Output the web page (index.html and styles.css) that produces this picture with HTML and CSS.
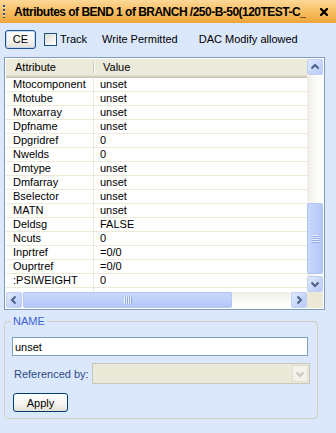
FILE: index.html
```html
<!DOCTYPE html>
<html>
<head>
<meta charset="utf-8">
<link rel="stylesheet" href="styles.css">
</head>
<body>
<div class="titlebar">
  <div class="grip"></div>
  <div class="title">Attributes of BEND 1 of BRANCH /250-B-50(120TEST-C_</div>
  <svg class="close" width="8" height="8" viewBox="0 0 8 8"><path d="M1 1 L7 7 M7 1 L1 7" stroke="#000" stroke-width="2.2" stroke-linecap="square"/></svg>
</div>

<div class="toolbar">
  <button class="btn ce">CE</button>
  <span class="check"></span>
  <span class="lbl track">Track</span>
  <span class="lbl wp">Write Permitted</span>
  <span class="lbl dac">DAC Modify allowed</span>
</div>

<div class="gridframe">
  <div class="main">
    <div class="header">
      <div class="hcell h1">Attribute</div>
      <div class="hcell h2">Value</div>
    </div>
    <div class="row"><div class="c1">Mtocomponent</div><div class="c2">unset</div></div>
    <div class="row"><div class="c1">Mtotube</div><div class="c2">unset</div></div>
    <div class="row"><div class="c1">Mtoxarray</div><div class="c2">unset</div></div>
    <div class="row"><div class="c1">Dpfname</div><div class="c2">unset</div></div>
    <div class="row"><div class="c1">Dpgridref</div><div class="c2">0</div></div>
    <div class="row"><div class="c1">Nwelds</div><div class="c2">0</div></div>
    <div class="row"><div class="c1">Dmtype</div><div class="c2">unset</div></div>
    <div class="row"><div class="c1">Dmfarray</div><div class="c2">unset</div></div>
    <div class="row"><div class="c1">Bselector</div><div class="c2">unset</div></div>
    <div class="row"><div class="c1">MATN</div><div class="c2">unset</div></div>
    <div class="row"><div class="c1">Deldsg</div><div class="c2">FALSE</div></div>
    <div class="row"><div class="c1">Ncuts</div><div class="c2">0</div></div>
    <div class="row"><div class="c1">Inprtref</div><div class="c2">=0/0</div></div>
    <div class="row"><div class="c1">Ouprtref</div><div class="c2">=0/0</div></div>
    <div class="row"><div class="c1">:PSIWEIGHT</div><div class="c2">0</div></div>
    <div class="row"><div class="c1"></div><div class="c2"></div></div>
  </div>
  <div class="vscroll">
    <div class="sbtn"><svg width="14" height="14" viewBox="0 0 14 14"><polyline points="3.5,8.5 7,5 10.5,8.5" fill="none" stroke="#4d6185" stroke-width="2"/></svg></div>
    <div class="vgap"></div>
    <div class="vthumb"><span class="grips-h"><i></i><i></i><i></i><i></i></span></div>
    <div class="vrest"></div>
    <div class="sbtn"><svg width="14" height="14" viewBox="0 0 14 14"><polyline points="3.5,5.5 7,9 10.5,5.5" fill="none" stroke="#4d6185" stroke-width="2"/></svg></div>
  </div>
  <div class="hscroll">
    <div class="sbtn"><svg width="14" height="14" viewBox="0 0 14 14"><polyline points="8.5,3.5 5,7 8.5,10.5" fill="none" stroke="#4d6185" stroke-width="2"/></svg></div>
    <div class="hthumb"><span class="grips-v"><i></i><i></i><i></i><i></i></span></div>
    <div class="hrest"></div>
    <div class="sbtn"><svg width="14" height="14" viewBox="0 0 14 14"><polyline points="5.5,3.5 9,7 5.5,10.5" fill="none" stroke="#4d6185" stroke-width="2"/></svg></div>
  </div>
  <div class="corner"></div>
</div>

<fieldset class="group">
  <legend>NAME</legend>
  <input class="name" type="text" value="unset">
  <div class="refrow">
    <span class="reflbl">Referenced by:</span>
    <div class="combo">
      <div class="comboarrow"><svg width="14" height="14" viewBox="0 0 14 14"><polyline points="3.5,5.5 7,9 10.5,5.5" fill="none" stroke="#c9c7ba" stroke-width="2"/></svg></div>
    </div>
  </div>
  <button class="btn apply">Apply</button>
</fieldset>
</body>
</html>
```

FILE: styles.css
```css
* { box-sizing: border-box; }
html, body { margin: 0; padding: 0; }
body {
  width: 336px;
  height: 433px;
  overflow: hidden;
  background: #dbe7fb;
  font-family: "Liberation Sans", Arial, sans-serif;
  font-size: 11px;
  color: #000;
}

.titlebar {
  height: 23px;
  display: flex;
  align-items: center;
  background: linear-gradient(#fcd898, #f7be62 50%, #f0a53a);
}
.grip {
  width: 2px;
  height: 13px;
  margin-left: 3px;
  flex: none;
  background: repeating-linear-gradient(to bottom, #2b4a8e 0 2px, #fbe6c0 2px 3px, transparent 3px 4px);
}
.title {
  margin-left: 9px;
  font-weight: bold;
  font-size: 12px;
  white-space: nowrap;
  letter-spacing: -0.52px;
  flex: 0 1 auto;
  overflow: hidden;
}
.close { margin-left: auto; margin-right: 8px; flex: none; }

.toolbar {
  height: 18px;
  margin-top: 7px;
  padding-left: 5px;
  display: flex;
  align-items: center;
}
.btn {
  font-family: "Liberation Sans", Arial, sans-serif;
  font-size: 11px;
  color: #000;
  border: 1px solid #1c4f8c;
  border-radius: 3px;
  background: linear-gradient(#ffffff, #f4f3ee 60%, #e2dfd4);
  padding: 0;
}
.ce {
  width: 31px;
  height: 19px;
  box-shadow: inset 0 0 0 1px #c5d8f8;
}
.check {
  width: 13px;
  height: 13px;
  margin-left: 8px;
  border: 1px solid #1c5180;
  background: linear-gradient(135deg, #dcdcd4, #f6f6f2 70%, #ffffff);
}
.lbl { white-space: nowrap; }
.track { margin-left: 3px; }
.wp { margin-left: 15px; }
.dac { margin-left: 21px; }

.gridframe {
  margin: 9px 0 0 4px;
  width: 321px;
  height: 253px;
  border: 1px solid #7f9db9;
  padding: 1px;
  background: #fff;
  display: grid;
  grid-template-columns: 301px 16px;
  grid-template-rows: 233px 16px;
}
.main { overflow: hidden; background: #fff; }
.header {
  height: 19px;
  display: grid;
  grid-template-columns: 88px 1fr;
  background: #ebeadb;
  box-shadow: inset 0 -1px #cbc7b8, inset 0 -2px #d6d2c2, inset 0 -3px #e2dfd0;
}
.hcell { line-height: 17px; padding-left: 9px; }
.h1 { position: relative; }
.h1::after {
  content: "";
  position: absolute;
  right: 0;
  top: 3px;
  bottom: 5px;
  width: 1px;
  background: #cbc7b8;
  box-shadow: 1px 0 #fff;
}
.row {
  height: 14px;
  display: grid;
  grid-template-columns: 88px 1fr;
  border-bottom: 1px solid #ece9d8;
}
.c1 { border-right: 1px solid #ece9d8; padding-left: 7px; line-height: 13px; white-space: nowrap; }
.c2 { padding-left: 6px; line-height: 13px; white-space: nowrap; }

.vscroll {
  display: flex;
  flex-direction: column;
  background: linear-gradient(to right, #efede4, #fbfbf8 60%, #fefefe);
}
.sbtn {
  width: 16px;
  height: 16px;
  flex: none;
  border: 1px solid #c0d0f5;
  border-radius: 2px;
  background: linear-gradient(135deg, #e2eafd, #c6d5fb 60%, #b9cbf8);
  display: flex;
  align-items: center;
  justify-content: center;
}
.vgap { height: 128px; flex: none; }
.vthumb {
  height: 71px;
  flex: none;
  border: 1px solid #b3c6f3;
  border-radius: 2px;
  background: linear-gradient(to right, #c8d7fc, #bccefa 60%, #b2c6f7);
  display: flex;
  align-items: center;
  justify-content: center;
}
.vrest { flex: 1; }
.grips-h { display: flex; flex-direction: column; gap: 1px; }
.grips-h i { display: block; width: 7px; height: 1px; background: #eef3ff; box-shadow: 0 1px #8fa9e6; }
.hscroll {
  display: flex;
  background: linear-gradient(#efede4, #fbfbf8 60%, #fefefe);
}
.hthumb {
  width: 209px;
  margin-left: 1px;
  flex: none;
  border: 1px solid #b3c6f3;
  border-radius: 2px;
  background: linear-gradient(#c8d7fc, #bccefa 60%, #b2c6f7);
  display: flex;
  align-items: center;
  justify-content: center;
}
.grips-v { display: flex; gap: 1px; }
.grips-v i { display: block; width: 1px; height: 7px; background: #eef3ff; box-shadow: 1px 0 #8fa9e6; }
.hrest { flex: 1; }
.corner { background: #ece9d8; }

.group {
  margin: 5px 0 0 4px;
  width: 314px;
  border: 1px solid #d0d0bf;
  border-radius: 4px;
  padding: 9px 6px 6px 6px;
  min-width: 0;
}
.group legend {
  padding: 0 2px;
  font-size: 11px;
  line-height: 13px;
  color: #3c62d4;
}
.name {
  display: block;
  margin-left: 1px;
  width: 296px;
  height: 19px;
  border: 1px solid #7f9db9;
  padding: 0 0 0 2px;
  font-family: "Liberation Sans", Arial, sans-serif;
  font-size: 11px;
  color: #000;
  background: #fff;
  outline: none;
}
.refrow {
  margin-top: 7px;
  height: 21px;
  display: flex;
  align-items: center;
}
.reflbl {
  width: 81px;
  padding-left: 3px;
  color: #2c4a86;
  white-space: nowrap;
  flex: none;
}
.combo {
  width: 218px;
  height: 21px;
  border: 1px solid #c9c7ba;
  background: #ebe9d8;
  display: flex;
  justify-content: flex-end;
  padding: 1px;
}
.comboarrow {
  width: 16px;
  height: 17px;
  border: 1px solid #e0ded2;
  background: #f2f1ea;
  display: flex;
  align-items: center;
  justify-content: center;
}
.apply {
  display: block;
  margin: 9px 0 0 2px;
  width: 55px;
  height: 19px;
  border-color: #003c74;
}
```
